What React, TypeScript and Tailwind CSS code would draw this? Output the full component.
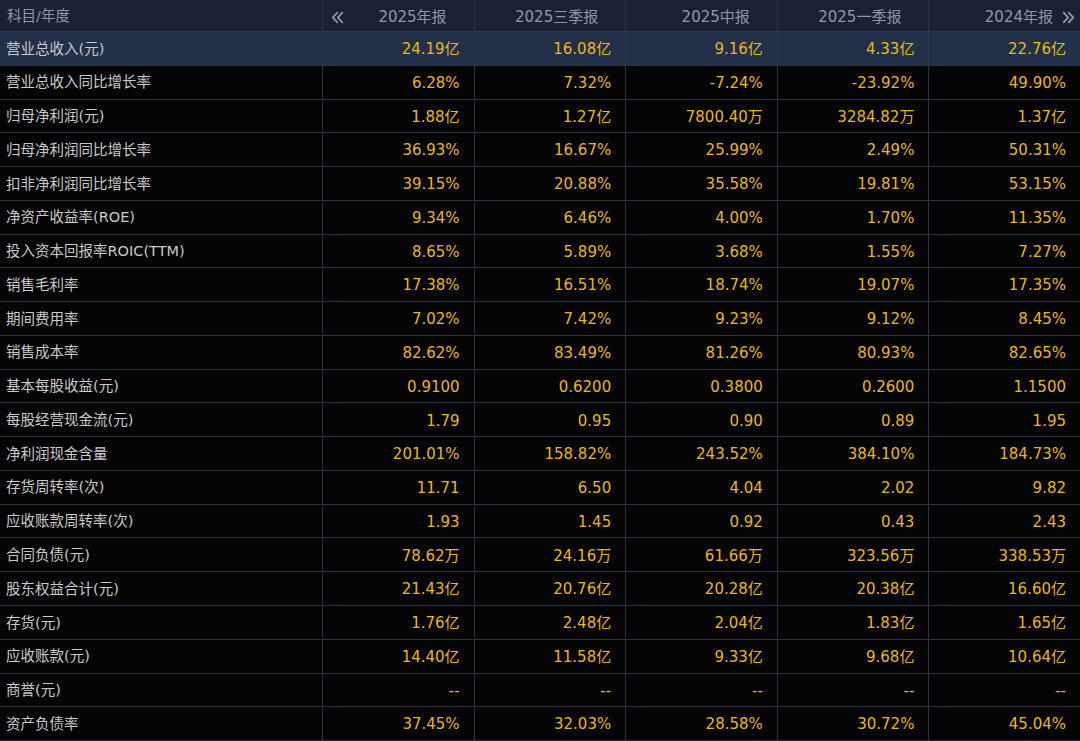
import React from 'react';

const periods = ['2025年报', '2025三季报', '2025中报', '2025一季报', '2024年报'];

const rows: [string, string[]][] = [
  ['营业总收入(元)', ['24.19亿', '16.08亿', '9.16亿', '4.33亿', '22.76亿']],
  ['营业总收入同比增长率', ['6.28%', '7.32%', '-7.24%', '-23.92%', '49.90%']],
  ['归母净利润(元)', ['1.88亿', '1.27亿', '7800.40万', '3284.82万', '1.37亿']],
  ['归母净利润同比增长率', ['36.93%', '16.67%', '25.99%', '2.49%', '50.31%']],
  ['扣非净利润同比增长率', ['39.15%', '20.88%', '35.58%', '19.81%', '53.15%']],
  ['净资产收益率(ROE)', ['9.34%', '6.46%', '4.00%', '1.70%', '11.35%']],
  ['投入资本回报率ROIC(TTM)', ['8.65%', '5.89%', '3.68%', '1.55%', '7.27%']],
  ['销售毛利率', ['17.38%', '16.51%', '18.74%', '19.07%', '17.35%']],
  ['期间费用率', ['7.02%', '7.42%', '9.23%', '9.12%', '8.45%']],
  ['销售成本率', ['82.62%', '83.49%', '81.26%', '80.93%', '82.65%']],
  ['基本每股收益(元)', ['0.9100', '0.6200', '0.3800', '0.2600', '1.1500']],
  ['每股经营现金流(元)', ['1.79', '0.95', '0.90', '0.89', '1.95']],
  ['净利润现金含量', ['201.01%', '158.82%', '243.52%', '384.10%', '184.73%']],
  ['存货周转率(次)', ['11.71', '6.50', '4.04', '2.02', '9.82']],
  ['应收账款周转率(次)', ['1.93', '1.45', '0.92', '0.43', '2.43']],
  ['合同负债(元)', ['78.62万', '24.16万', '61.66万', '323.56万', '338.53万']],
  ['股东权益合计(元)', ['21.43亿', '20.76亿', '20.28亿', '20.38亿', '16.60亿']],
  ['存货(元)', ['1.76亿', '2.48亿', '2.04亿', '1.83亿', '1.65亿']],
  ['应收账款(元)', ['14.40亿', '11.58亿', '9.33亿', '9.68亿', '10.64亿']],
  ['商誉(元)', ['--', '--', '--', '--', '--']],
  ['资产负债率', ['37.45%', '32.03%', '28.58%', '30.72%', '45.04%']],
];

const gridCols = 'grid grid-cols-[322px_repeat(5,minmax(0,1fr))]';

const Chevrons: React.FC<{ dir: 'left' | 'right'; className?: string }> = ({ dir, className }) => (
  <svg viewBox="0 0 14 14" className={className} fill="none" stroke="currentColor" strokeWidth="2" strokeLinecap="square">
    {dir === 'left' ? (
      <>
        <path d="M6.5 2 L2 7 L6.5 12" />
        <path d="M12 2 L7.5 7 L12 12" />
      </>
    ) : (
      <>
        <path d="M2 2 L6.5 7 L2 12" />
        <path d="M7.5 2 L12 7 L7.5 12" />
      </>
    )}
  </svg>
);

export default function App() {
  return (
    <div className="flex h-[741px] w-[1080px] flex-col overflow-hidden bg-black font-['DejaVu_Sans','Noto_Sans_CJK_SC',sans-serif]">
      <div className={`${gridCols} h-[32px] shrink-0 border-b border-[#2f3a4e] bg-[#1a2232] text-[15px] text-[#8e98aa]`}>
        <div className="flex items-center pl-[7px] pt-[3px] text-[14.5px]">科目/年度</div>
        {periods.map((p, i) => (
          <div key={p} className="relative flex items-center justify-end border-l border-[#2c3547] pr-[27px] pt-[3px]">
            {i === 0 && <Chevrons dir="left" className="absolute left-[8px] top-[11px] h-[13px] w-[13px]" />}
            <span>{p}</span>
            {i === periods.length - 1 && (
              <Chevrons dir="right" className="absolute right-[5px] top-[11px] h-[13px] w-[13px]" />
            )}
          </div>
        ))}
      </div>

      {rows.map(([label, values], r) => (
        <div
          key={label}
          className={`${gridCols} min-h-0 flex-1 border-b border-[#2a3345] ${r === 0 ? 'bg-[#233049]' : 'bg-[#040404]'}`}
        >
          <div className="flex items-center pl-[6px] pt-[2px] text-[14.5px] text-[#cacaca]">{label}</div>
          {values.map((v, i) => (
            <div
              key={i}
              className="flex items-center justify-end border-l border-[#2c3547] pr-[14px] pt-[2px] text-[15px] text-[#e8b71c]"
            >
              {v}
            </div>
          ))}
        </div>
      ))}
    </div>
  );
}
